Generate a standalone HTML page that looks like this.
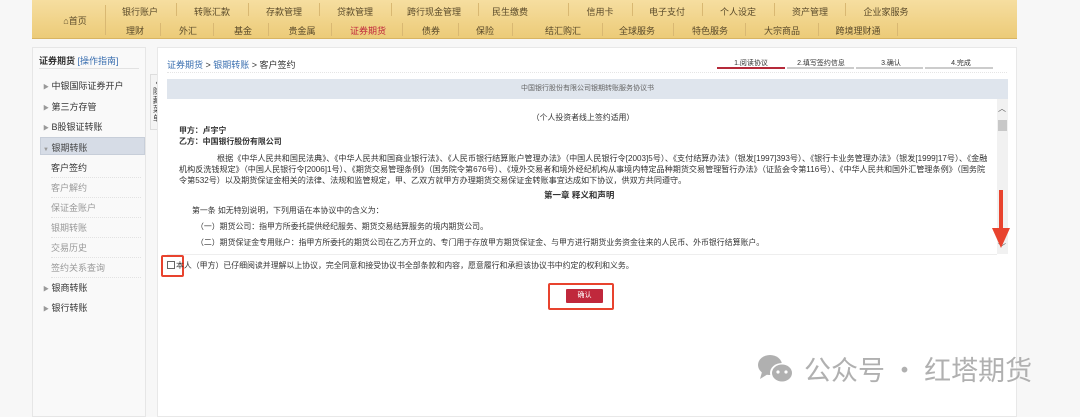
<!DOCTYPE html>
<html><head><meta charset="utf-8"><style>
*{margin:0;padding:0;box-sizing:border-box}
body{width:1080px;height:412px;background:#f7f7f7;font-family:"Liberation Sans","Noto Sans CJK SC",sans-serif;position:relative;overflow:hidden;font-size:9px;color:#333}
.a{position:absolute;white-space:nowrap}
.nav{left:32px;top:0;width:985px;height:39px;background:linear-gradient(#f6dea0,#eccb78);border-bottom:1px solid #d8b463}
.n{position:absolute;font-size:9px;color:#5a4a2a;transform:translateX(-50%)}
.sep{position:absolute;width:1px;height:13px;background:#d9b872}
.side{left:32px;top:47px;width:114px;height:370px;background:#f9f9f9;border:1px solid #e6e6e6}
.si{position:absolute;left:18px;font-size:9px;color:#333}
.sub{position:absolute;left:18px;font-size:9px;color:#999;width:110px;border-bottom:1px dotted #e2e2e2;padding-bottom:3px}
.main{left:157px;top:47px;width:860px;height:370px;background:#fff;border:1px solid #e8e8e8}
.t{font-size:7.9px;color:#333}
</style></head><body>
<div class="a nav">
<div class="n" style="left:43px;top:14px;font-size:9px">⌂首页</div>
<div class="sep" style="left:73px;top:5px;height:30px"></div>
<div class="n" style="left:108px;top:5px">银行账户</div><div class="n" style="left:180px;top:5px">转账汇款</div><div class="n" style="left:252px;top:5px">存款管理</div><div class="n" style="left:323px;top:5px">贷款管理</div><div class="n" style="left:402px;top:5px">跨行现金管理</div><div class="n" style="left:478px;top:5px">民生缴费</div><div class="n" style="left:568px;top:5px">信用卡</div><div class="n" style="left:635px;top:5px">电子支付</div><div class="n" style="left:706px;top:5px">个人设定</div><div class="n" style="left:778px;top:5px">资产管理</div><div class="n" style="left:854px;top:5px">企业家服务</div>
<div class="sep" style="left:144px;top:3px"></div><div class="sep" style="left:216px;top:3px"></div><div class="sep" style="left:287px;top:3px"></div><div class="sep" style="left:359px;top:3px"></div><div class="sep" style="left:446px;top:3px"></div><div class="sep" style="left:536px;top:3px"></div><div class="sep" style="left:600px;top:3px"></div><div class="sep" style="left:670px;top:3px"></div><div class="sep" style="left:742px;top:3px"></div><div class="sep" style="left:813px;top:3px"></div>
<div class="n" style="left:103px;top:24px">理财</div><div class="n" style="left:156px;top:24px">外汇</div><div class="n" style="left:211px;top:24px">基金</div><div class="n" style="left:270px;top:24px">贵金属</div><div class="n" style="left:336px;top:24px;color:#c0283c">证券期货</div><div class="n" style="left:399px;top:24px">债券</div><div class="n" style="left:453px;top:24px">保险</div><div class="n" style="left:531px;top:24px">结汇购汇</div><div class="n" style="left:605px;top:24px">全球服务</div><div class="n" style="left:678px;top:24px">特色服务</div><div class="n" style="left:750px;top:24px">大宗商品</div><div class="n" style="left:826px;top:24px">跨境理财通</div>
<div class="sep" style="left:128px;top:23px"></div><div class="sep" style="left:181px;top:23px"></div><div class="sep" style="left:236px;top:23px"></div><div class="sep" style="left:299px;top:23px"></div><div class="sep" style="left:370px;top:23px"></div><div class="sep" style="left:426px;top:23px"></div><div class="sep" style="left:480px;top:23px"></div><div class="sep" style="left:570px;top:23px"></div><div class="sep" style="left:641px;top:23px"></div><div class="sep" style="left:713px;top:23px"></div><div class="sep" style="left:786px;top:23px"></div><div class="sep" style="left:865px;top:23px"></div>
</div>
<div class="a side">
<div class="si" style="left:6px;top:6px;font-weight:bold">证券期货 <span style="color:#3a6fb0;font-weight:normal">[操作指南]</span></div>
<div class="a" style="left:6px;top:20px;width:100px;height:1px;background:#e2e2e2"></div>
<div class="si" style="left:10px;top:31px"><span style="color:#999;font-size:6px">▶</span> 中银国际证券开户</div>
<div class="si" style="left:10px;top:52px"><span style="color:#999;font-size:6px">▶</span> 第三方存管</div>
<div class="si" style="left:10px;top:72px"><span style="color:#999;font-size:6px">▶</span> B股银证转账</div>
<div class="a" style="left:7px;top:89px;width:105px;height:18px;background:#d6dce6;border:1px solid #c7ced9"></div>
<div class="si" style="left:10px;top:93px;color:#444"><span style="color:#999;font-size:6px">▼</span> 银期转账</div>
<div class="sub" style="top:113px;color:#333;width:90px">客户签约</div>
<div class="sub" style="top:133px;width:90px">客户解约</div>
<div class="sub" style="top:153px;width:90px">保证金账户</div>
<div class="sub" style="top:173px;width:90px">银期转账</div>
<div class="sub" style="top:193px;width:90px">交易历史</div>
<div class="sub" style="top:213px;width:90px">签约关系查询</div>
<div class="si" style="left:10px;top:233px"><span style="color:#999;font-size:6px">▶</span> 银商转账</div>
<div class="si" style="left:10px;top:253px"><span style="color:#999;font-size:6px">▶</span> 银行转账</div>
</div>
<div class="a" style="left:150px;top:74px;width:13px;height:56px;background:#f4f4f4;border:1px solid #ddd;overflow:hidden">
<div style="position:absolute;left:1px;top:3px;width:10px;font-size:8px;line-height:9px;color:#333;text-align:center;white-space:normal">‹<br>隐<br>藏<br>菜<br>单</div></div>
<div class="a main">
<div class="a" style="left:9px;top:10px;font-size:9px;color:#3a6fb0">证券期货 <span style="color:#333">&gt;</span> 银期转账 <span style="color:#333">&gt; 客户签约</span></div>
<div class="a" style="left:9px;top:24px;width:840px;border-top:1px dotted #e5e5e5"></div>
<div class="a" style="left:559px;top:10px;width:68px;text-align:center;font-size:7px">1.阅读协议</div>
<div class="a" style="left:629px;top:10px;width:68px;text-align:center;font-size:7px">2.填写签约信息</div>
<div class="a" style="left:699px;top:10px;width:68px;text-align:center;font-size:7px">3.确认</div>
<div class="a" style="left:769px;top:10px;width:68px;text-align:center;font-size:7px">4.完成</div>
<div class="a" style="left:559px;top:19px;width:68px;height:2px;background:#b52a3a"></div>
<div class="a" style="left:629px;top:19px;width:67px;height:2px;background:#ccc"></div>
<div class="a" style="left:698px;top:19px;width:67px;height:2px;background:#ccc"></div>
<div class="a" style="left:767px;top:19px;width:68px;height:2px;background:#ccc"></div>
<div class="a" style="left:9px;top:31px;width:841px;height:20px;background:#dfe5ed;font-size:7px;color:#666;text-align:center;line-height:20px">中国银行股份有限公司银期转账服务协议书</div>
<div class="a" style="left:839px;top:51px;width:11px;height:155px;background:#f1f1f1"></div>
<div class="a" style="left:840px;top:55px;font-size:8px;color:#555">︿</div>
<div class="a" style="left:840px;top:72px;width:9px;height:11px;background:#c8c8c8"></div>
<div class="a" style="left:840px;top:194px;font-size:8px;color:#555">﹀</div>
<svg class="a" style="left:834px;top:142px" width="18" height="60"><rect x="7" y="0" width="4" height="40" fill="#e8432e"/><path d="M0 38 L18 38 L9 58 Z" fill="#e8432e"/></svg>
<div class="a t" style="left:0;width:850px;text-align:center;top:64px">（个人投资者线上签约适用）</div>
<div class="a t" style="left:21px;top:77px;font-weight:bold">甲方：卢宇宁</div>
<div class="a t" style="left:21px;top:88px;font-weight:bold">乙方：中国银行股份有限公司</div>
<div class="a t" style="left:21px;top:105px;line-height:11px;white-space:normal;width:810px;text-indent:38px;font-size:8.1px">根据《中华人民共和国民法典》、《中华人民共和国商业银行法》、《人民币银行结算账户管理办法》（中国人民银行令[2003]5号）、《支付结算办法》（银发[1997]393号）、《银行卡业务管理办法》（银发[1999]17号）、《金融机构反洗钱规定》（中国人民银行令[2006]1号）、《期货交易管理条例》（国务院令第676号）、《境外交易者和境外经纪机构从事境内特定品种期货交易管理暂行办法》（证监会令第116号）、《中华人民共和国外汇管理条例》（国务院令第532号）以及期货保证金相关的法律、法规和监管规定，甲、乙双方就甲方办理期货交易保证金转账事宜达成如下协议，供双方共同遵守。</div>
<div class="a" style="left:386px;top:141px;font-size:8.5px;font-weight:bold">第一章 释义和声明</div>
<div class="a t" style="left:34px;top:157px">第一条 如无特别说明，下列用语在本协议中的含义为：</div>
<div class="a t" style="left:38px;top:173px">（一）期货公司：指甲方所委托提供经纪服务、期货交易结算服务的境内期货公司。</div>
<div class="a t" style="left:38px;top:189px">（二）期货保证金专用账户：指甲方所委托的期货公司在乙方开立的、专门用于存放甲方期货保证金、与甲方进行期货业务资金往来的人民币、外币银行结算账户。</div>
<div class="a" style="left:9px;top:206px;width:830px;height:1px;background:#eee"></div>
<div class="a" style="left:3px;top:207px;width:23px;height:22px;border:2px solid #e8432e;border-radius:2px"></div>
<div class="a" style="left:9px;top:213px;width:8px;height:8px;border:1px solid #666;background:#fff"></div>
<div class="a t" style="left:18px;top:212px">本人（甲方）已仔细阅读并理解以上协议，完全同意和接受协议书全部条款和内容，愿意履行和承担该协议书中约定的权利和义务。</div>
<div class="a" style="left:390px;top:235px;width:66px;height:27px;border:2px solid #e8432e;border-radius:2px"></div>
<div class="a" style="left:408px;top:241px;width:37px;height:14px;background:#c0283c;color:#fff;font-size:7px;text-align:center;line-height:14px;border-radius:1px">确认</div>
</div>
<svg class="a" style="left:756px;top:352px" width="42" height="34"><ellipse cx="14" cy="13" rx="12" ry="10" fill="#b0b0b0"/><path d="M6 20 L4 27 L12 22Z" fill="#b0b0b0"/><ellipse cx="26" cy="21" rx="12" ry="10" fill="#fff"/><ellipse cx="26" cy="21" rx="10" ry="8.5" fill="#b0b0b0"/><circle cx="22" cy="20" r="1.6" fill="#fff"/><circle cx="30" cy="20" r="1.6" fill="#fff"/></svg>
<div class="a" style="left:804px;top:349px;font-size:27px;color:#b0b0b0;font-family:'Noto Sans CJK SC',sans-serif">公众号 · 红塔期货</div>
</body></html>
